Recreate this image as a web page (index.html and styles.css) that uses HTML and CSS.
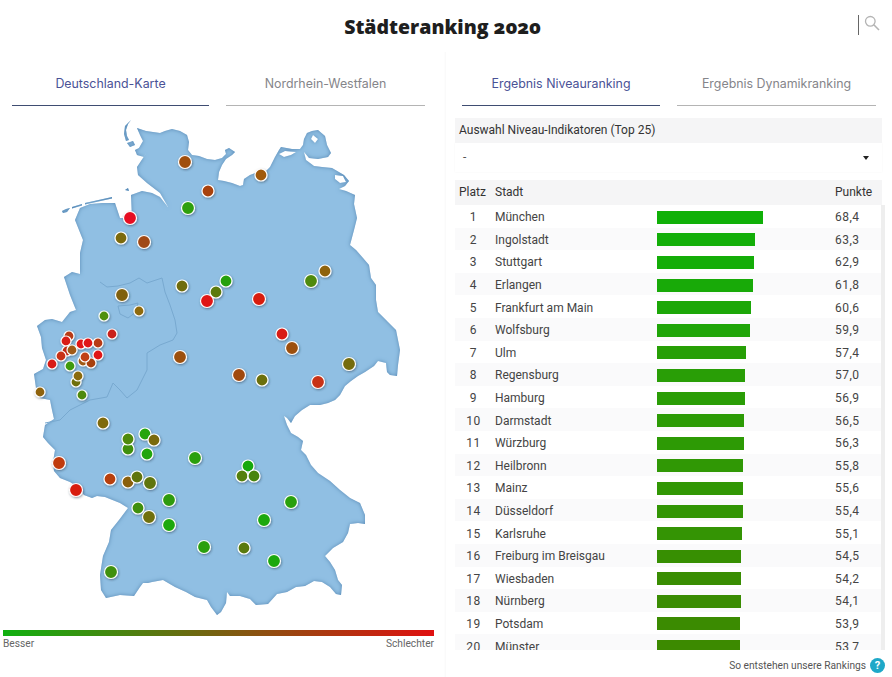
FILE: index.html
```html
<!DOCTYPE html>
<html lang="de">
<head>
<meta charset="utf-8">
<title>Städteranking 2020</title>
<link rel="stylesheet" href="styles.css">
</head>
<body>
<header class="top">
  <h1 class="title">Städteranking 2020</h1>
  <div class="search">
    <svg class="search-icon" width="16" height="16" viewBox="0 0 16 16"><circle cx="6.3" cy="6.3" r="4.8" fill="none" stroke="#b4b4b4" stroke-width="1.3"/><path d="M9.8 9.8L15 15" stroke="#b4b4b4" stroke-width="1.6" fill="none"/></svg>
  </div>
</header>
<main class="layout">
  <section class="pane-left">
    <nav class="tabs">
      <a class="tab active">Deutschland-Karte</a>
      <a class="tab">Nordrhein-Westfalen</a>
    </nav>
    <svg class="map" width="443" height="515" viewBox="0 110 443 515">
      <defs>
        <filter id="shade" x="-5%" y="-5%" width="110%" height="110%">
          <feGaussianBlur in="SourceAlpha" stdDeviation="2" result="b"/>
          <feComposite in="SourceAlpha" in2="b" operator="out" result="edge"/>
          <feFlood flood-color="#4a7fae" flood-opacity="1"/>
          <feComposite in2="edge" operator="in" result="inner"/>
          <feMerge><feMergeNode in="SourceGraphic"/><feMergeNode in="inner"/></feMerge>
        </filter>
        <filter id="pin" x="-40%" y="-40%" width="180%" height="180%">
          <feDropShadow dx="0.7" dy="1" stdDeviation="1" flood-color="#20303f" flood-opacity="0.5"/>
        </filter>
      </defs>
      <g class="land" filter="url(#shade)">
        <path fill-rule="evenodd" d="M137 128L146 131L160 133L165 131L172 129L180 131L187 135L189 142L188 150L192 155L199 156L207 159L215 160L222 158L226 154L225 150L229 148L235 152L232 155L226 159L222 165L219 172L218 180L224 181L232 183L240 186L243 185L244 179L250 175L258 172L265 172L270 167L275 157L279 150L281 147L292 149L300 149L303 145L304 139L307 133L312 131L318 130L325 136L327 145L331 153L328 157L318 159L309 158L304 152L306 160L314 166L322 167L332 168L344 175L349 181L345 186L339 189L346 191L355 195L354 204L357 218L354 230L350 245L356 250L363 258L369 265L371 278L376 285L376 300L378 312L386 320L396 330L398 340L400 350L398 365L397 376L390 375L387 372L386 363L378 361L374 366L365 372L358 376L351 381L345 386L340 395L335 400L328 403L320 405L310 405L302 410L295 416L291 423L287 418L284 416L287 425L291 433L298 437L303 441L301 450L306 455L311 465L318 473L330 481L340 490L350 498L360 503L365 515L365 524L358 523L350 524L348 533L343 542L333 548L325 556L330 562L335 570L338 580L342 585L341 595L336 594L330 587L322 582L314 581L305 586L296 587L287 592L277 594L268 604L256 605L250 599L240 596L230 596L227 592L226 603L221 612L217 615L211 607L207 600L195 597L186 592L175 587L163 580L152 582L148 583L143 583L140 587L134 596L120 595L106 598L101 590L100 575L103 556L109 542L111 530L119 520L128 508L120 503L105 497L97 496L92 498L84 495L78 487L70 482L60 478L54 471L53 462L55 450L48 443L43 437L45 425L54 419L52 410L50 400L40 398L36 388L34 374L43 369L46 360L42 348L41 337L37 326L45 320L52 319L62 322L70 312L76 310L70 295L64 277L72 272L80 274L80 262L80 253L83 240L75 220L80 208L90 204L102 203L115 203L120 218L132 218L131 195L142 191L152 193L160 197L168 207L160 193L147 183L138 175L137 167L143 158L146 153L139 148L143 141L140 135Z M279 154L285 151L296 152L291 155L284 157Z M313 135L318 139L315 143L311 139Z M335 175L343 176L346 182L340 183L335 179Z"/>
        <path d="M125 126L131 120L128 124L126 130L127 136L129 140L126 141L124 134Z"/>
        <path d="M127 143L133 141L135 145L130 147Z"/>
        <path d="M135 150L141 147L147 152L144 157L137 155Z"/>
        <path d="M62 211L66 209L70 208L67 212L63 213Z"/>
        <path d="M72 207L82 204L82 205.5L72 208.5Z"/>
        <path d="M85 203L112 197L112 198.5L85 204.5Z"/>
        <path d="M125 190L128 188L129 191Z"/>
      </g>
      <path class="border" d="M100 282L107 287L118 286L130 283L139 278L147 283L162 278L165 292L170 305L175 320L177 333L173 340L160 345L147 353L147 370L137 390L127 398L120 390L113 383L107 397L90 400L70 410L60 420L45 423"/>
      <path class="border" d="M118 306L130 305L138 303L136 312L128 318L120 314Z"/>
      <g class="pins" filter="url(#pin)">
        <circle cx="185" cy="162" r="6.5" fill="#a04f10"/>
        <circle cx="261" cy="175" r="6" fill="#a05a10"/>
        <circle cx="208" cy="191" r="6" fill="#a8430f"/>
        <circle cx="188" cy="208" r="6.5" fill="#2f9f10"/>
        <circle cx="130" cy="218" r="6.5" fill="#e60f20"/>
        <circle cx="121" cy="238" r="6" fill="#7c6a10"/>
        <circle cx="144" cy="242" r="6.5" fill="#a04a15"/>
        <circle cx="182" cy="286" r="6" fill="#6f6d10"/>
        <circle cx="226" cy="281" r="6" fill="#27a010"/>
        <circle cx="216" cy="292" r="6" fill="#5b7a10"/>
        <circle cx="207" cy="301" r="6.5" fill="#e01515"/>
        <circle cx="259" cy="299" r="6.5" fill="#d81a10"/>
        <circle cx="325" cy="271" r="6" fill="#8f6410"/>
        <circle cx="311" cy="281" r="6.5" fill="#4f8a10"/>
        <circle cx="122" cy="295" r="6.5" fill="#806010"/>
        <circle cx="139" cy="311" r="5" fill="#8f6a10"/>
        <circle cx="104" cy="316" r="5" fill="#4f9010"/>
        <circle cx="112" cy="334" r="5" fill="#c9201a"/>
        <circle cx="282" cy="334" r="6" fill="#d81a15"/>
        <circle cx="69" cy="336" r="5" fill="#b83a15"/>
        <circle cx="66" cy="341" r="5" fill="#d81a15"/>
        <circle cx="98" cy="343" r="5" fill="#b83a15"/>
        <circle cx="81" cy="344" r="5" fill="#e01515"/>
        <circle cx="88" cy="343" r="5" fill="#e01515"/>
        <circle cx="67" cy="351" r="5" fill="#c02a15"/>
        <circle cx="72" cy="350" r="5" fill="#a05a15"/>
        <circle cx="61" cy="356" r="5" fill="#c83015"/>
        <circle cx="83" cy="361" r="5" fill="#a05a15"/>
        <circle cx="91" cy="363" r="5" fill="#a84010"/>
        <circle cx="85" cy="357" r="5" fill="#c04015"/>
        <circle cx="98" cy="355" r="5" fill="#e01515"/>
        <circle cx="52" cy="364" r="5" fill="#d81a15"/>
        <circle cx="70" cy="366" r="5" fill="#3f9a10"/>
        <circle cx="76" cy="382" r="5" fill="#6f7010"/>
        <circle cx="78" cy="376" r="5" fill="#8a6a10"/>
        <circle cx="40" cy="392" r="5" fill="#8f6410"/>
        <circle cx="82" cy="395" r="5" fill="#4f8a10"/>
        <circle cx="180" cy="357" r="6.5" fill="#9c5010"/>
        <circle cx="292" cy="348" r="6.5" fill="#9c5010"/>
        <circle cx="239" cy="375" r="6.5" fill="#a0480f"/>
        <circle cx="262" cy="380" r="6" fill="#6c7010"/>
        <circle cx="349" cy="364" r="6.5" fill="#746c10"/>
        <circle cx="318" cy="382" r="6.5" fill="#c83015"/>
        <circle cx="103" cy="423" r="6" fill="#7f6a10"/>
        <circle cx="128" cy="449" r="6" fill="#3f8f10"/>
        <circle cx="128" cy="439" r="6" fill="#4f8a10"/>
        <circle cx="145" cy="434" r="6" fill="#25a510"/>
        <circle cx="154" cy="440" r="6" fill="#7a6a10"/>
        <circle cx="147" cy="454" r="6" fill="#22a510"/>
        <circle cx="195" cy="458" r="6.5" fill="#2a9f10"/>
        <circle cx="248" cy="466" r="6" fill="#18a810"/>
        <circle cx="242" cy="476" r="6" fill="#558010"/>
        <circle cx="254" cy="476" r="6" fill="#4a8510"/>
        <circle cx="59" cy="463" r="6.5" fill="#c03a10"/>
        <circle cx="110" cy="479" r="6" fill="#b84010"/>
        <circle cx="128" cy="482" r="6" fill="#8a6010"/>
        <circle cx="137" cy="477" r="6" fill="#607510"/>
        <circle cx="150" cy="483" r="6.5" fill="#5f7510"/>
        <circle cx="76" cy="490" r="6.5" fill="#d81a10"/>
        <circle cx="169" cy="500" r="6.5" fill="#2f9a10"/>
        <circle cx="291" cy="502" r="6.5" fill="#2aa010"/>
        <circle cx="138" cy="508" r="6" fill="#3f8f10"/>
        <circle cx="149" cy="517" r="6.5" fill="#6f7010"/>
        <circle cx="169" cy="525" r="6.5" fill="#1fa810"/>
        <circle cx="264" cy="520" r="6.5" fill="#1fa810"/>
        <circle cx="204" cy="547" r="6.5" fill="#2a9f10"/>
        <circle cx="244" cy="548" r="6" fill="#5a7a10"/>
        <circle cx="274" cy="561" r="6.5" fill="#1fa810"/>
        <circle cx="111" cy="572" r="6.5" fill="#3f9010"/>
      </g>
    </svg>
    <div class="legend">
      <div class="legend-bar"></div>
      <div class="legend-labels"><span>Besser</span><span>Schlechter</span></div>
    </div>
  </section>
  <section class="pane-right">
    <nav class="tabs">
      <a class="tab active">Ergebnis Niveauranking</a>
      <a class="tab">Ergebnis Dynamikranking</a>
    </nav>
    <div class="panel">
      <div class="filter-label">Auswahl Niveau-Indikatoren (Top 25)</div>
      <div class="filter-select"><span>-</span><span class="caret"></span></div>
      <div class="table-head"><span class="c-rank">Platz</span><span class="c-city">Stadt</span><span class="c-bar"></span><span class="c-pts">Punkte</span></div>
      <div class="table-body">
        <div class="row"><span class="c-rank">1</span><span class="c-city">München</span><span class="c-bar"><i class="bar" style="width:106px;background:#10b008"></i></span><span class="c-pts">68,4</span></div>
        <div class="row"><span class="c-rank">2</span><span class="c-city">Ingolstadt</span><span class="c-bar"><i class="bar" style="width:98px;background:#12ae08"></i></span><span class="c-pts">63,3</span></div>
        <div class="row"><span class="c-rank">3</span><span class="c-city">Stuttgart</span><span class="c-bar"><i class="bar" style="width:97px;background:#14ad08"></i></span><span class="c-pts">62,9</span></div>
        <div class="row"><span class="c-rank">4</span><span class="c-city">Erlangen</span><span class="c-bar"><i class="bar" style="width:96px;background:#18aa08"></i></span><span class="c-pts">61,8</span></div>
        <div class="row"><span class="c-rank">5</span><span class="c-city">Frankfurt am Main</span><span class="c-bar"><i class="bar" style="width:94px;background:#1ca708"></i></span><span class="c-pts">60,6</span></div>
        <div class="row"><span class="c-rank">6</span><span class="c-city">Wolfsburg</span><span class="c-bar"><i class="bar" style="width:93px;background:#1fa508"></i></span><span class="c-pts">59,9</span></div>
        <div class="row"><span class="c-rank">7</span><span class="c-city">Ulm</span><span class="c-bar"><i class="bar" style="width:89px;background:#279f06"></i></span><span class="c-pts">57,4</span></div>
        <div class="row"><span class="c-rank">8</span><span class="c-city">Regensburg</span><span class="c-bar"><i class="bar" style="width:88px;background:#299e06"></i></span><span class="c-pts">57,0</span></div>
        <div class="row"><span class="c-rank">9</span><span class="c-city">Hamburg</span><span class="c-bar"><i class="bar" style="width:88px;background:#2a9d06"></i></span><span class="c-pts">56,9</span></div>
        <div class="row"><span class="c-rank">10</span><span class="c-city">Darmstadt</span><span class="c-bar"><i class="bar" style="width:87px;background:#2c9b05"></i></span><span class="c-pts">56,5</span></div>
        <div class="row"><span class="c-rank">11</span><span class="c-city">Würzburg</span><span class="c-bar"><i class="bar" style="width:87px;background:#2d9a05"></i></span><span class="c-pts">56,3</span></div>
        <div class="row"><span class="c-rank">12</span><span class="c-city">Heilbronn</span><span class="c-bar"><i class="bar" style="width:86px;background:#309805"></i></span><span class="c-pts">55,8</span></div>
        <div class="row"><span class="c-rank">13</span><span class="c-city">Mainz</span><span class="c-bar"><i class="bar" style="width:86px;background:#319704"></i></span><span class="c-pts">55,6</span></div>
        <div class="row"><span class="c-rank">14</span><span class="c-city">Düsseldorf</span><span class="c-bar"><i class="bar" style="width:86px;background:#329504"></i></span><span class="c-pts">55,4</span></div>
        <div class="row"><span class="c-rank">15</span><span class="c-city">Karlsruhe</span><span class="c-bar"><i class="bar" style="width:85px;background:#349404"></i></span><span class="c-pts">55,1</span></div>
        <div class="row"><span class="c-rank">16</span><span class="c-city">Freiburg im Breisgau</span><span class="c-bar"><i class="bar" style="width:84px;background:#378f02"></i></span><span class="c-pts">54,5</span></div>
        <div class="row"><span class="c-rank">17</span><span class="c-city">Wiesbaden</span><span class="c-bar"><i class="bar" style="width:84px;background:#398d02"></i></span><span class="c-pts">54,2</span></div>
        <div class="row"><span class="c-rank">18</span><span class="c-city">Nürnberg</span><span class="c-bar"><i class="bar" style="width:84px;background:#3a8c02"></i></span><span class="c-pts">54,1</span></div>
        <div class="row"><span class="c-rank">19</span><span class="c-city">Potsdam</span><span class="c-bar"><i class="bar" style="width:83px;background:#3b8b01"></i></span><span class="c-pts">53,9</span></div>
        <div class="row"><span class="c-rank">20</span><span class="c-city">Münster</span><span class="c-bar"><i class="bar" style="width:83px;background:#3c8a00"></i></span><span class="c-pts">53,7</span></div>
      </div>
      <div class="foot"><span>So entstehen unsere Rankings</span><span class="help">?</span></div>
    </div>
  </section>
</main>
</body>
</html>
```

FILE: styles.css
```css
* { box-sizing: border-box; }
html, body { margin: 0; padding: 0; }
body {
  width: 892px;
  height: 677px;
  overflow: hidden;
  background: #fff;
  font-family: "Roboto", "Liberation Sans", sans-serif;
  font-size: 12px;
  color: #444;
}
.top {
  position: relative;
  height: 52px;
  display: flex;
  justify-content: center;
  align-items: center;
}
.title {
  margin: 0 7px 0 0;
  font-family: "Open Sans", sans-serif;
  font-weight: 800;
  font-size: 19.5px;
  font-variant-numeric: oldstyle-nums;
  color: #1e1e1e;
}
.search {
  position: absolute;
  left: 858px;
  top: 15px;
  height: 20px;
  padding-left: 5px;
  border-left: 1px solid #666;
}
.search-icon { display: block; }
.layout {
  display: grid;
  grid-template-columns: 446px 446px;
}
.pane-left {
  height: 625px;
  padding-top: 3px;
  box-shadow: inset -2px 0 2px -1px #f8f8f8;
}
.pane-right { padding-top: 3px; }
.tabs {
  display: grid;
  grid-template-columns: 197px 199px;
  column-gap: 17px;
  margin-left: 12px;
}
.pane-right .tabs { margin-left: 16px; grid-template-columns: 198px 199px; }
.tab {
  height: 51px;
  padding-top: 21px;
  text-align: center;
  font-family: "Inter", sans-serif;
  font-size: 12.4px;
  line-height: 16px;
  color: #85858a;
  border-bottom: 1px solid #b4b4b4;
}
.tab.active { color: #4a5296; border-bottom-color: #3f4d72; }
.map { display: block; margin-top: 4px; }
.land { fill: #90bfe3; }
.border { fill: none; stroke: #78a9d0; stroke-width: 1; }
.pins circle { stroke: #fff; stroke-width: 1.2; }
.legend { margin: 5px 12px 0 3px; }
.legend-bar {
  height: 6px;
  background: linear-gradient(to right, #10b010, #e01010);
}
.legend-labels {
  display: flex;
  justify-content: space-between;
  padding-top: 1px;
  font-size: 10.2px;
  line-height: 14px;
  color: #666;
}
.panel { margin: 12px 0 0 9px; width: 427px; position: relative; }
.filter-label {
  height: 25px;
  padding: 0 4px;
  line-height: 24px;
  background: #f5f5f6;
  color: #333;
}
.filter-select {
  height: 29px;
  padding: 0 2px 2px 8px;
  display: flex;
  justify-content: space-between;
  align-items: center;
  color: #555;
  margin-bottom: 8px;
  box-shadow: 0 0 2px #f4f4f4;
}
.caret {
  width: 0;
  height: 0;
  margin-right: 11px;
  margin-top: 2px;
  border-left: 3.5px solid transparent;
  border-right: 3.5px solid transparent;
  border-top: 4px solid #222;
}
.table-head, .row {
  display: grid;
  grid-template-columns: 40px 162px 178px 46px;
  align-items: center;
}
.table-head {
  height: 25px;
  padding-bottom: 2px;
  background: #f5f5f6;
  color: #333;
}
.table-body {
  height: 445px;
  width: 426px;
  overflow: hidden;
  box-shadow: 4px 0 0 #eeeeee;
}
.row { height: 22.6px; padding-top: 2px; }
.row:nth-child(even) { background: #fafafb; }
.table-head .c-rank { padding-left: 4px; }
.row .c-rank { text-align: center; letter-spacing: 0.6px; padding-right: 3px; }
.row .c-pts { letter-spacing: 0.5px; }
.bar { display: block; height: 13px; }
.foot {
  position: absolute;
  right: -3px;
  top: 540px;
  display: flex;
  align-items: center;
  gap: 4px;
  font-size: 10.2px;
  color: #555;
}
.help {
  width: 15px;
  height: 15px;
  border-radius: 50%;
  background: #1ea8c8;
  color: #fff;
  font-weight: 700;
  font-size: 11px;
  line-height: 15px;
  text-align: center;
}
```
